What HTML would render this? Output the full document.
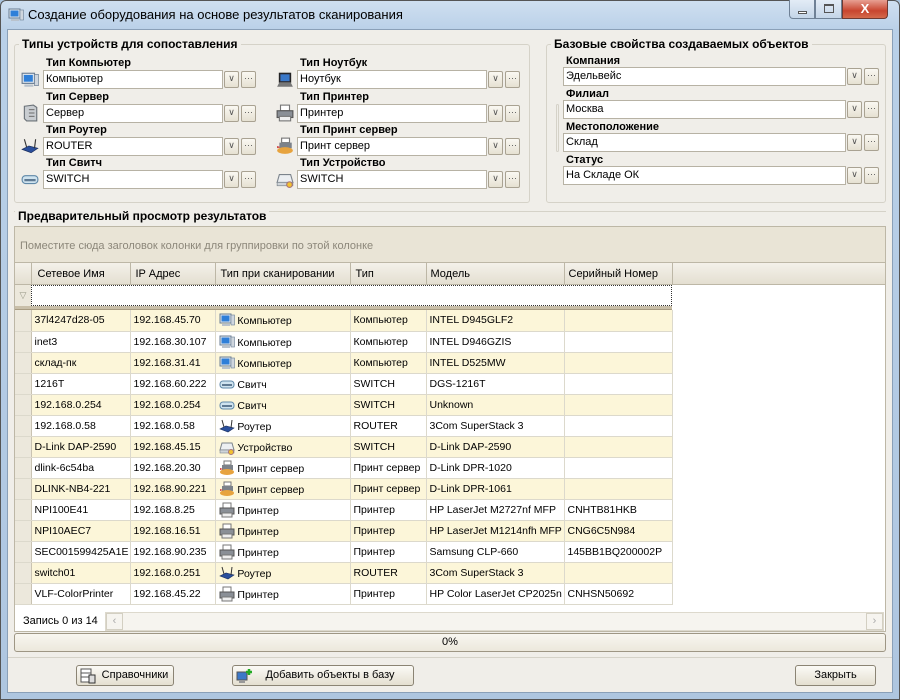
<!DOCTYPE html>
<html><head><meta charset="utf-8">
<style>
*{box-sizing:border-box;margin:0;padding:0}
body{width:900px;height:700px;overflow:hidden;font-family:"Liberation Sans",sans-serif;font-size:11px;color:#000;position:relative;background:#a9c3de}
.a{position:absolute}
#win{left:0;top:0;width:900px;height:700px;background:linear-gradient(#cfdff0,#b9d0e8 30px,#aec6e0);border:1px solid #555;border-radius:6px 6px 0 0}
#client{left:7px;top:29px;width:886px;height:664px;background:#f0eee9;border:1px solid #8aa0b8}
.title{left:28px;top:7px;font-size:13px;color:#000}
.grp{border:1px solid #d5d2c8;border-radius:3px}
.leg{background:#f0eee9;font-weight:bold;font-size:12px;padding:0 3px}
.lbl{font-weight:bold;font-size:11px}
.cb{height:19px;background:#fff;border:1px solid #b7b2a4;padding:2px 2px;font-size:11px;line-height:13px}
.btn{width:15px;height:17px;border:1px solid #a9a292;border-radius:2px;background:linear-gradient(#faf8f2,#e6e1d2);font-size:9px;text-align:center;line-height:13px;color:#555}
.grid td{border-right:1px solid #dcd9cc;border-bottom:1px solid #dcd9cc;height:21px;padding:0 3px;white-space:nowrap;overflow:hidden;font-size:10.5px}
.grid tr.y td{background:#fcf6d9}
.grid td.ind{background:#ece8dc !important;padding:0;border-right:1px solid #c9c3b2}
.wbtn{height:21px;border:1px solid #8b8474;border-radius:3px;background:linear-gradient(#fbfaf6,#e4dfd0);font-size:11px;text-align:center;line-height:19px}
</style></head><body>
<svg width="0" height="0" style="position:absolute">
<defs>
<symbol id="pc" viewBox="0 0 16 16"><rect x="1" y="2" width="11" height="9" fill="#dfe6ee" stroke="#6a7d93"/><rect x="2.5" y="3.5" width="8" height="6" fill="#2f7fd8"/><rect x="12" y="3" width="3.5" height="10" fill="#cfd6de" stroke="#6a7d93" stroke-width=".6"/><rect x="3" y="12" width="8" height="2" fill="#b9c2cc"/></symbol>
<symbol id="sw" viewBox="0 0 16 16"><rect x="1" y="5" width="14" height="7" rx="3" fill="#cfe3ef" stroke="#5f88a8"/><rect x="3" y="8" width="10" height="2" fill="#5f7a93"/></symbol>
<symbol id="rt" viewBox="0 0 16 16"><path d="M1 11 L9 14 L15 10 L7 8 Z" fill="#2a4f9c" stroke="#1b2f5e" stroke-width=".6"/><line x1="5" y1="9" x2="3" y2="2" stroke="#333"/><line x1="12" y1="10" x2="13" y2="2" stroke="#333"/></symbol>
<symbol id="pr" viewBox="0 0 16 16"><rect x="4" y="1" width="8" height="5" fill="#fff" stroke="#777"/><rect x="1" y="6" width="14" height="6" fill="#8a8f96" stroke="#555"/><rect x="3" y="11" width="10" height="4" fill="#eee" stroke="#777"/></symbol>
<symbol id="ps" viewBox="0 0 16 16"><rect x="5" y="1" width="7" height="4" fill="#fff" stroke="#777"/><rect x="3" y="5" width="11" height="5" fill="#7c828a"/><ellipse cx="8" cy="12" rx="7" ry="3" fill="#e7a33e"/><path d="M1 8 L4 9 L1 10Z" fill="#c33"/></symbol>
<symbol id="dv" viewBox="0 0 16 16"><path d="M3 4 L13 4 L15 11 L1 11 Z" fill="#eceff2" stroke="#7c848c"/><rect x="1" y="11" width="14" height="3" fill="#cfd4d9" stroke="#7c848c" stroke-width=".6"/><circle cx="12" cy="13" r="2.5" fill="#f2c230" stroke="#a77"/></symbol>
<symbol id="sv" viewBox="0 0 16 16"><path d="M3 2 L11 1 L14 3 L14 15 L5 15 L3 13Z" fill="#c9cdd1" stroke="#6b7278"/><line x1="7" y1="5" x2="12" y2="5" stroke="#777"/><line x1="7" y1="8" x2="12" y2="8" stroke="#777"/><line x1="7" y1="11" x2="12" y2="11" stroke="#777"/></symbol>
<symbol id="nb" viewBox="0 0 16 16"><rect x="3" y="2" width="10" height="8" fill="#334" stroke="#222"/><rect x="4" y="3" width="8" height="6" fill="#3a78c8"/><path d="M1 14 L3 10 L13 10 L15 14Z" fill="#777"/></symbol>
</defs></svg>
<div id="win" class="a"></div>
<svg class="a" style="left:8px;top:7px" width="16" height="16"><use href="#pc"/></svg>
<div class="a title">Создание оборудования на основе результатов сканирования</div>
<div class="a" style="left:789px;top:0;width:26px;height:19px;border:1px solid #6f8196;border-top:none;border-radius:0 0 0 4px;background:linear-gradient(#e3ecf6,#c4d5e8)"><div class="a" style="left:8px;top:11px;width:9px;height:3px;border:1px solid #555;background:#fff"></div></div>
<div class="a" style="left:815px;top:0;width:27px;height:19px;border:1px solid #6f8196;border-top:none;background:linear-gradient(#e3ecf6,#c4d5e8)"><div class="a" style="left:8px;top:4px;width:10px;height:9px;border:1px solid #555;border-top-width:2px"></div></div>
<div class="a" style="left:842px;top:0;width:46px;height:19px;border:1px solid #6f3a32;border-top:none;border-radius:0 0 4px 0;background:linear-gradient(#e7a093,#c8452f 60%,#d46a4c);color:#fff;font-weight:bold;text-align:center;font-size:13px;line-height:17px">X</div>
<div id="client" class="a"></div>

<div class="a grp" style="left:14px;top:44px;width:516px;height:159px"></div>
<div class="a leg" style="left:19px;top:37px">Типы устройств для сопоставления</div>
<div class="a grp" style="left:546px;top:44px;width:340px;height:159px"></div>
<div class="a leg" style="left:551px;top:37px">Базовые свойства создаваемых объектов</div>
<div class="a" style="left:556px;top:104px;width:3px;height:48px;border:1px solid #d5d2c8;border-radius:2px"></div>

<div class="a lbl" style="left:46px;top:57px">Тип Компьютер</div>
<svg class="a" style="left:21px;top:71px" width="18" height="18"><use href="#pc"/></svg>
<div class="a cb" style="left:43px;top:70px;width:180px">Компьютер</div><div class="a btn" style="left:224px;top:71px">&#8744;</div><div class="a btn" style="left:241px;top:71px">···</div>
<div class="a lbl" style="left:46px;top:91px">Тип Сервер</div>
<svg class="a" style="left:21px;top:104px" width="18" height="18"><use href="#sv"/></svg>
<div class="a cb" style="left:43px;top:104px;width:180px">Сервер</div><div class="a btn" style="left:224px;top:105px">&#8744;</div><div class="a btn" style="left:241px;top:105px">···</div>
<div class="a lbl" style="left:46px;top:124px">Тип Роутер</div>
<svg class="a" style="left:21px;top:137px" width="18" height="18"><use href="#rt"/></svg>
<div class="a cb" style="left:43px;top:137px;width:180px">ROUTER</div><div class="a btn" style="left:224px;top:138px">&#8744;</div><div class="a btn" style="left:241px;top:138px">···</div>
<div class="a lbl" style="left:46px;top:157px">Тип Свитч</div>
<svg class="a" style="left:21px;top:170px" width="18" height="18"><use href="#sw"/></svg>
<div class="a cb" style="left:43px;top:170px;width:180px">SWITCH</div><div class="a btn" style="left:224px;top:171px">&#8744;</div><div class="a btn" style="left:241px;top:171px">···</div>

<div class="a lbl" style="left:300px;top:57px">Тип Ноутбук</div>
<svg class="a" style="left:276px;top:71px" width="18" height="18"><use href="#nb"/></svg>
<div class="a cb" style="left:297px;top:70px;width:190px">Ноутбук</div><div class="a btn" style="left:488px;top:71px">&#8744;</div><div class="a btn" style="left:505px;top:71px">···</div>
<div class="a lbl" style="left:300px;top:91px">Тип Принтер</div>
<svg class="a" style="left:276px;top:104px" width="18" height="18"><use href="#pr"/></svg>
<div class="a cb" style="left:297px;top:104px;width:190px">Принтер</div><div class="a btn" style="left:488px;top:105px">&#8744;</div><div class="a btn" style="left:505px;top:105px">···</div>
<div class="a lbl" style="left:300px;top:124px">Тип Принт сервер</div>
<svg class="a" style="left:276px;top:137px" width="18" height="18"><use href="#ps"/></svg>
<div class="a cb" style="left:297px;top:137px;width:190px">Принт сервер</div><div class="a btn" style="left:488px;top:138px">&#8744;</div><div class="a btn" style="left:505px;top:138px">···</div>
<div class="a lbl" style="left:300px;top:157px">Тип Устройство</div>
<svg class="a" style="left:276px;top:170px" width="18" height="18"><use href="#dv"/></svg>
<div class="a cb" style="left:297px;top:170px;width:190px">SWITCH</div><div class="a btn" style="left:488px;top:171px">&#8744;</div><div class="a btn" style="left:505px;top:171px">···</div>

<div class="a lbl" style="left:566px;top:55px">Компания</div>
<div class="a cb" style="left:563px;top:67px;width:283px">Эдельвейс</div><div class="a btn" style="left:847px;top:68px">&#8744;</div><div class="a btn" style="left:864px;top:68px">···</div>
<div class="a lbl" style="left:566px;top:88px">Филиал</div>
<div class="a cb" style="left:563px;top:100px;width:283px">Москва</div><div class="a btn" style="left:847px;top:101px">&#8744;</div><div class="a btn" style="left:864px;top:101px">···</div>
<div class="a lbl" style="left:566px;top:121px">Местоположение</div>
<div class="a cb" style="left:563px;top:133px;width:283px">Склад</div><div class="a btn" style="left:847px;top:134px">&#8744;</div><div class="a btn" style="left:864px;top:134px">···</div>
<div class="a lbl" style="left:566px;top:154px">Статус</div>
<div class="a cb" style="left:563px;top:166px;width:283px">На Складе ОК</div><div class="a btn" style="left:847px;top:167px">&#8744;</div><div class="a btn" style="left:864px;top:167px">···</div>

<div class="a" style="left:14px;top:211px;width:872px;border-top:1px solid #d5d2c8"></div>
<div class="a leg" style="left:15px;top:209px">Предварительный просмотр результатов</div>

<div class="a" style="left:14px;top:226px;width:872px;height:406px;border:1px solid #bdb7a6;background:#fff"></div>
<div class="a" style="left:15px;top:227px;width:870px;height:36px;background:#e9e4d6"></div>
<div class="a" style="left:20px;top:240px;color:#8c877a">Поместите сюда заголовок колонки для группировки по этой колонке</div>
<div class="a" style="left:15px;top:262px;width:870px;height:23px;background:linear-gradient(#f4f1ea,#e4dfd1);border-top:1px solid #bdb7a6;border-bottom:1px solid #bdb7a6"></div>
<div class="a" style="left:15px;top:285px;width:16px;height:21px;background:#ece8dc;color:#998;font-size:9px;text-align:center;line-height:20px">&#9661;</div>
<div class="a" style="left:31px;top:285px;width:641px;height:21px;border:1px dotted #333;background:#fff"></div>
<div class="a" style="left:15px;top:306px;width:657px;height:4px;background:#c9bfa9;border-bottom:1px solid #a89c82"></div>
<div class="a" style="left:15px;top:262px;font-size:11px">
<table style="border-collapse:collapse;position:absolute;left:0;top:0;width:657px;table-layout:fixed">
<tr style="height:23px"><td style="width:16px;border-right:1px solid #bdb7a6"></td>
<td style="width:99px;padding-left:6px;border-right:1px solid #bdb7a6">Сетевое Имя</td>
<td style="width:85px;padding-left:5px;border-right:1px solid #bdb7a6">IP Адрес</td>
<td style="width:135px;padding-left:5px;border-right:1px solid #bdb7a6">Тип при сканировании</td>
<td style="width:76px;padding-left:5px;border-right:1px solid #bdb7a6">Тип</td>
<td style="width:138px;padding-left:4px;border-right:1px solid #bdb7a6">Модель</td>
<td style="width:108px;padding-left:4px;border-right:1px solid #bdb7a6">Серийный Номер</td></tr>
</table>
</div>
<table class="a grid" style="left:15px;top:310px;border-collapse:collapse;table-layout:fixed;width:657px">
<colgroup><col style="width:16px"><col style="width:99px"><col style="width:85px"><col style="width:135px"><col style="width:76px"><col style="width:138px"><col style="width:108px"></colgroup>
<tr class="y"><td class="ind"></td><td>37l4247d28-05</td><td>192.168.45.70</td><td><svg width="16" height="16" style="vertical-align:-4px"><use href="#pc"/></svg> Компьютер</td><td>Компьютер</td><td>INTEL D945GLF2</td><td></td></tr>
<tr><td class="ind"></td><td>inet3</td><td>192.168.30.107</td><td><svg width="16" height="16" style="vertical-align:-4px"><use href="#pc"/></svg> Компьютер</td><td>Компьютер</td><td>INTEL D946GZIS</td><td></td></tr>
<tr class="y"><td class="ind"></td><td>склад-пк</td><td>192.168.31.41</td><td><svg width="16" height="16" style="vertical-align:-4px"><use href="#pc"/></svg> Компьютер</td><td>Компьютер</td><td>INTEL D525MW</td><td></td></tr>
<tr><td class="ind"></td><td>1216T</td><td>192.168.60.222</td><td><svg width="16" height="16" style="vertical-align:-4px"><use href="#sw"/></svg> Свитч</td><td>SWITCH</td><td>DGS-1216T</td><td></td></tr>
<tr class="y"><td class="ind"></td><td>192.168.0.254</td><td>192.168.0.254</td><td><svg width="16" height="16" style="vertical-align:-4px"><use href="#sw"/></svg> Свитч</td><td>SWITCH</td><td>Unknown</td><td></td></tr>
<tr><td class="ind"></td><td>192.168.0.58</td><td>192.168.0.58</td><td><svg width="16" height="16" style="vertical-align:-4px"><use href="#rt"/></svg> Роутер</td><td>ROUTER</td><td>3Com SuperStack 3</td><td></td></tr>
<tr class="y"><td class="ind"></td><td>D-Link DAP-2590</td><td>192.168.45.15</td><td><svg width="16" height="16" style="vertical-align:-4px"><use href="#dv"/></svg> Устройство</td><td>SWITCH</td><td>D-Link DAP-2590</td><td></td></tr>
<tr><td class="ind"></td><td>dlink-6c54ba</td><td>192.168.20.30</td><td><svg width="16" height="16" style="vertical-align:-4px"><use href="#ps"/></svg> Принт сервер</td><td>Принт сервер</td><td>D-Link DPR-1020</td><td></td></tr>
<tr class="y"><td class="ind"></td><td>DLINK-NB4-221</td><td>192.168.90.221</td><td><svg width="16" height="16" style="vertical-align:-4px"><use href="#ps"/></svg> Принт сервер</td><td>Принт сервер</td><td>D-Link DPR-1061</td><td></td></tr>
<tr><td class="ind"></td><td>NPI100E41</td><td>192.168.8.25</td><td><svg width="16" height="16" style="vertical-align:-4px"><use href="#pr"/></svg> Принтер</td><td>Принтер</td><td>HP LaserJet M2727nf MFP</td><td>CNHTB81HKB</td></tr>
<tr class="y"><td class="ind"></td><td>NPI10AEC7</td><td>192.168.16.51</td><td><svg width="16" height="16" style="vertical-align:-4px"><use href="#pr"/></svg> Принтер</td><td>Принтер</td><td>HP LaserJet M1214nfh MFP</td><td>CNG6C5N984</td></tr>
<tr><td class="ind"></td><td>SEC001599425A1E</td><td>192.168.90.235</td><td><svg width="16" height="16" style="vertical-align:-4px"><use href="#pr"/></svg> Принтер</td><td>Принтер</td><td>Samsung CLP-660</td><td>145BB1BQ200002P</td></tr>
<tr class="y"><td class="ind"></td><td>switch01</td><td>192.168.0.251</td><td><svg width="16" height="16" style="vertical-align:-4px"><use href="#rt"/></svg> Роутер</td><td>ROUTER</td><td>3Com SuperStack 3</td><td></td></tr>
<tr><td class="ind"></td><td>VLF-ColorPrinter</td><td>192.168.45.22</td><td><svg width="16" height="16" style="vertical-align:-4px"><use href="#pr"/></svg> Принтер</td><td>Принтер</td><td>HP Color LaserJet CP2025n</td><td>CNHSN50692</td></tr>
</table>
<div class="a" style="left:23px;top:615px">Запись 0 из 14</div>
<div class="a" style="left:105px;top:612px;width:779px;height:19px;background:#f6f4ef;border:1px solid #ddd9cd"></div>
<div class="a" style="left:106px;top:613px;width:17px;height:17px;border:1px solid #d3cfc2;color:#aaa;text-align:center;line-height:15px">&lsaquo;</div>
<div class="a" style="left:866px;top:613px;width:17px;height:17px;border:1px solid #d3cfc2;color:#aaa;text-align:center;line-height:15px">&rsaquo;</div>

<div class="a" style="left:14px;top:633px;width:872px;height:19px;border:1px solid #9e9684;border-radius:3px;background:linear-gradient(#f8f6f0,#ece8dc);text-align:center;line-height:17px">0%</div>
<div class="a" style="left:8px;top:657px;width:884px;border-top:1px solid #d5d2c8"></div>

<div class="a wbtn" style="left:76px;top:665px;width:98px"><svg width="16" height="16" style="position:absolute;left:3px;top:2px"><rect x="1" y="1" width="10" height="13" fill="#fff" stroke="#555"/><line x1="1" y1="5" x2="11" y2="5" stroke="#555"/><line x1="1" y1="9" x2="11" y2="9" stroke="#555"/><rect x="9" y="7" width="6" height="8" fill="#ddd" stroke="#333"/></svg><span style="padding-left:20px">Справочники</span></div>
<div class="a wbtn" style="left:232px;top:665px;width:182px"><svg width="18" height="16" style="position:absolute;left:3px;top:2px"><rect x="1" y="4" width="10" height="8" fill="#3c78c8" stroke="#555"/><rect x="3" y="12" width="6" height="3" fill="#999"/><path d="M13 1v6M10 4h6" stroke="#2a2" stroke-width="2.5"/></svg><span style="padding-left:14px">Добавить объекты в базу</span></div>
<div class="a wbtn" style="left:795px;top:665px;width:81px">Закрыть</div>
</body></html>
